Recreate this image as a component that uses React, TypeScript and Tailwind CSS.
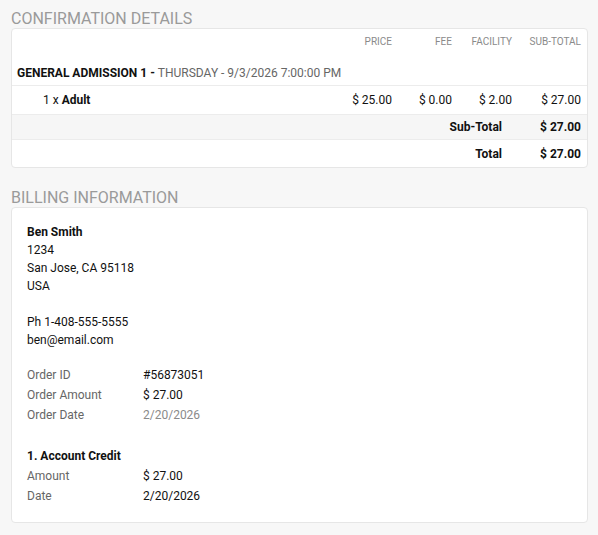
export default function App() {
  return (
    <div
      className="min-h-[535px] bg-[#f7f7f7] pl-[11px] pr-[10px] pt-[9px] text-[12px] text-[#111]"
      style={{ fontFamily: "Roboto, 'Liberation Sans', sans-serif" }}
    >
      <h2 className="text-[16px] leading-[19px] text-[#9a9a9a]">CONFIRMATION DETAILS</h2>
      <div className="overflow-hidden rounded-[4px] border border-[#e6e6e6] bg-white">
        <div className="flex h-[24px] items-center pr-[6px] text-[10px] uppercase text-[#8a8a8a]">
          <div className="flex-1" />
          <div className="w-[60px] text-right">Price</div>
          <div className="w-[60px] text-right">Fee</div>
          <div className="w-[60px] text-right">Facility</div>
          <div className="w-[69px] text-right">Sub-Total</div>
        </div>
        <div className="border-b border-[#ececec] pb-[4px] pl-[5px] pt-[12px] leading-[16px]">
          <span className="font-bold">GENERAL ADMISSION 1 - </span>
          <span className="text-[#666]">THURSDAY - 9/3/2026 7:00:00 PM</span>
        </div>
        <div className="flex h-[29px] items-center border-b border-[#ececec] pl-[31px] pr-[6px]">
          <div className="flex-1">
            1 x <span className="font-bold">Adult</span>
          </div>
          <div className="w-[60px] text-right">$ 25.00</div>
          <div className="w-[60px] text-right">$ 0.00</div>
          <div className="w-[60px] text-right">$ 2.00</div>
          <div className="w-[69px] text-right">$ 27.00</div>
        </div>
        <div className="flex h-[25px] items-center border-b border-[#ececec] bg-[#f6f6f6] pr-[6px] font-bold">
          <div className="flex-1 text-right">Sub-Total</div>
          <div className="w-[79px] text-right">$ 27.00</div>
        </div>
        <div className="flex h-[27px] items-center pr-[6px] font-bold">
          <div className="flex-1 text-right">Total</div>
          <div className="w-[79px] text-right">$ 27.00</div>
        </div>
      </div>

      <h2 className="mt-[20px] text-[16px] leading-[19px] text-[#9a9a9a]">BILLING INFORMATION</h2>
      <div className="rounded-[4px] border border-[#e6e6e6] bg-white pb-[16px] pl-[15px] pt-[15px]">
        <div className="leading-[18px]">
          <div className="font-bold">Ben Smith</div>
          <div>1234</div>
          <div>San Jose, CA 95118</div>
          <div>USA</div>
          <div className="h-[18px]" />
          <div>Ph 1-408-555-5555</div>
          <div>ben@email.com</div>
        </div>
        <div className="mt-[16px] leading-[20px]">
          <Row label="Order ID" value="#56873051" />
          <Row label="Order Amount" value="$ 27.00" />
          <Row label="Order Date" value="2/20/2026" muted />
        </div>
        <div className="mt-[21px] leading-[20px]">
          <div className="font-bold">1. Account Credit</div>
          <Row label="Amount" value="$ 27.00" />
          <Row label="Date" value="2/20/2026" />
        </div>
      </div>
    </div>
  );
}

function Row({ label, value, muted }: { label: string; value: string; muted?: boolean }) {
  return (
    <div className="flex">
      <div className="w-[116px] text-[#666]">{label}</div>
      <div className={muted ? "text-[#8a8a8a]" : ""}>{value}</div>
    </div>
  );
}
